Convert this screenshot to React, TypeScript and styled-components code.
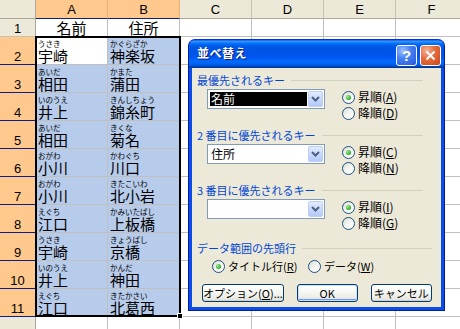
import React from "react";
import styled, { createGlobalStyle, css } from "styled-components";

const JP = `"Noto Sans CJK JP", "Liberation Sans", sans-serif`;

const GlobalStyle = createGlobalStyle`
  html, body {
    margin: 0;
    padding: 0;
    background: #ffffff;
    overflow: hidden;
  }
  body {
    font-family: "Liberation Sans", "Noto Sans CJK JP", sans-serif;
  }
  * {
    box-sizing: border-box;
  }
`;

const Screen = styled.div`
  position: relative;
  width: 460px;
  height: 329px;
  overflow: hidden;
  background: #ffffff;
`;

/* ---------- sheet ---------- */

type Pos = { $r: number; $c: number };

const placed = css<Pos>`
  grid-row: ${(p) => p.$r};
  grid-column: ${(p) => p.$c};
`;

const Sheet = styled.div`
  display: grid;
  grid-template-columns: 36px repeat(6, 72px);
  grid-template-rows: 19px 18px repeat(11, 28px);
`;

const Corner = styled.div<Pos>`
  ${placed}
  background: #ece9d8;
  border-right: 1px solid #aca899;
  border-bottom: 1px solid #aca899;
`;

const ColHeader = styled.div<Pos & { $active?: boolean }>`
  ${placed}
  display: flex;
  align-items: center;
  justify-content: center;
  padding-top: 1px;
  font-size: 13px;
  line-height: 14px;
  color: #000;
  background: ${(p) => (p.$active ? "#ffc88c" : "#ece9d8")};
  border-right: 1px solid ${(p) => (p.$active ? "#eab27a" : "#c5c2b2")};
  border-bottom: 1px solid ${(p) => (p.$active ? "#0a1e8c" : "#aca899")};
`;

const RowHeader = styled.div<Pos & { $active?: boolean }>`
  ${placed}
  display: flex;
  align-items: flex-end;
  justify-content: center;
  font-size: 13px;
  line-height: 14px;
  color: #000;
  background: ${(p) => (p.$active ? "#ffc88c" : "#ece9d8")};
  border-right: 1px solid ${(p) => (p.$active ? "#0a1e8c" : "#aca899")};
  border-bottom: 1px solid ${(p) => (p.$active ? "#0a1e8c" : "#c5c2b2")};
`;

const Cell = styled.div<Pos & { $selected?: boolean }>`
  ${placed}
  background: ${(p) => (p.$selected ? "#b7cbeb" : "#ffffff")};
  border-right: 1px solid #c0c0c0;
  border-bottom: 1px solid #c0c0c0;
  padding: 2px 0 0 2px;
  overflow: hidden;
  white-space: nowrap;
  font-family: ${JP};
  color: #000;
`;

const HeadCell = styled(Cell)`
  padding: 1px 0 0;
  text-align: center;
  font-size: 15px;
  line-height: 16px;
`;

const Kana = styled.div`
  font-size: 7.5px;
  line-height: 9px;
  height: 9px;
`;

const Kanji = styled.div`
  font-size: 15px;
  line-height: 16px;
`;

const Selection = styled.div`
  position: relative;
  grid-column: 2 / 4;
  grid-row: 3 / 13;
  margin: -1px -1px 0 -1px;
  border: 2px solid #000;
  pointer-events: none;
`;

const FillHandle = styled.div`
  position: absolute;
  right: -4px;
  bottom: -4px;
  width: 6px;
  height: 6px;
  background: #000;
  border: 1px solid #fff;
`;

/* ---------- dialog ---------- */

const Dialog = styled.div`
  position: absolute;
  left: 188px;
  top: 39px;
  width: 257px;
  height: 272px;
  display: flex;
  flex-direction: column;
  border: 1px solid #001ea0;
  border-top-color: #0831d9;
  border-radius: 7px 7px 0 0;
  background: #0b4ce6;
  overflow: hidden;
  font-family: ${JP};
`;

const TitleBar = styled.div`
  flex: none;
  height: 28px;
  display: flex;
  align-items: flex-end;
  padding: 0 3px 2px 8px;
  background: linear-gradient(
    to bottom,
    #0058ee 0%,
    #3a93ff 4%,
    #288eff 7%,
    #127dff 10%,
    #036ffc 13%,
    #0262ee 18%,
    #0057e5 24%,
    #0054e3 30%,
    #0055eb 56%,
    #005bf5 66%,
    #026afe 76%,
    #0062ef 86%,
    #0052d6 92%,
    #0040ab 96%,
    #003092 100%
  );
`;

const Title = styled.div`
  flex: 1;
  align-self: center;
  color: #ffffff;
  font-size: 12px;
  font-weight: bold;
  line-height: 16px;
  letter-spacing: 0.5px;
  text-shadow: 1px 1px 0 #0a1883;
`;

const CaptionButton = styled.div<{ $kind: "help" | "close" }>`
  width: 21px;
  height: 21px;
  display: flex;
  align-items: center;
  justify-content: center;
  border: 1px solid #ffffff;
  border-radius: 3px;
  color: #ffffff;
  font: bold 15px "Liberation Sans", sans-serif;
  background: ${(p) =>
    p.$kind === "close"
      ? "radial-gradient(circle at 30% 25%, #f4b49e 0%, #e6703f 40%, #cc4416 100%)"
      : "radial-gradient(circle at 30% 25%, #9cc0ff 0%, #4a82f4 40%, #2456d8 100%)"};
  & + & {
    margin-left: 3px;
  }
`;

const Body = styled.div`
  flex: 1;
  margin: 0 3px 3px;
  padding: 5px 9px 0 5px;
  display: flex;
  flex-direction: column;
  background: #ece9d8;
`;

const Section = styled.div<{ $top?: number }>`
  display: flex;
  flex-direction: column;
  margin-top: ${(p) => p.$top ?? 0}px;
`;

const GroupLabel = styled.div<{ $inset?: boolean }>`
  display: flex;
  align-items: center;
  gap: 6px;
  height: 14px;
  margin-right: ${(p) => (p.$inset ? 9 : 0)}px;
  color: #0046d5;
  font-size: 11px;
  line-height: 14px;
  white-space: nowrap;
  &::after {
    content: "";
    flex: 1;
    height: 1px;
    margin-top: 1px;
    background: #d0d0bf;
  }
`;

const KeyRow = styled.div`
  display: flex;
  height: 32px;
  margin-top: 2px;
`;

const Combo = styled.div`
  flex: none;
  display: flex;
  width: 118px;
  height: 20px;
  margin-left: 10px;
  border: 1px solid #7f9db9;
  background: #ffffff;
`;

const ComboValue = styled.div<{ $highlight?: boolean }>`
  flex: 1;
  margin: 2px 0 2px 2px;
  padding-left: 1px;
  font-size: 12px;
  line-height: 14px;
  white-space: nowrap;
  background: ${(p) => (p.$highlight ? "#000000" : "transparent")};
  color: ${(p) => (p.$highlight ? "#ffffff" : "#000000")};
`;

const DropButton = styled.div`
  flex: none;
  width: 15px;
  margin: 1px;
  display: flex;
  align-items: center;
  justify-content: center;
  border: 1px solid #bccdf6;
  border-radius: 2px;
  background: linear-gradient(#e2ebfe, #c8d8fc 55%, #b4c9f8);
`;

const RadioStack = styled.div`
  display: flex;
  flex-direction: column;
  margin-left: 17px;
`;

const RadioLine = styled.div`
  display: flex;
  margin-top: 3px;
  padding-left: 15px;
`;

const RadioItem = styled.div<{ $width?: number; $compact?: boolean }>`
  display: flex;
  align-items: center;
  gap: 3px;
  height: 16px;
  width: ${(p) => (p.$width ? `${p.$width}px` : "auto")};
  font-size: ${(p) => (p.$compact ? 11 : 12)}px;
  line-height: 14px;
  color: #000;
  white-space: nowrap;
`;

const RadioDot = styled.span<{ $checked?: boolean }>`
  flex: none;
  width: 13px;
  height: 13px;
  display: flex;
  align-items: center;
  justify-content: center;
  border: 1px solid #1c5180;
  border-radius: 50%;
  background: linear-gradient(135deg, #dcdcd4 0%, #f2f2ee 45%, #ffffff 80%);
  &::after {
    content: "";
    display: ${(p) => (p.$checked ? "block" : "none")};
    width: 5px;
    height: 5px;
    border-radius: 50%;
    background: radial-gradient(circle at 35% 35%, #a4ec8f 0%, #3bb83b 55%, #1f8f1f 100%);
  }
`;

const RadioText = styled.span``;

const Key = styled.span`
  text-decoration: underline;
  text-underline-offset: 1px;
`;

const ButtonRow = styled.div`
  display: flex;
  gap: 13px;
  margin-top: 10px;
  padding-left: 5px;
`;

const PushButton = styled.div<{ $width: number; $default?: boolean }>`
  width: ${(p) => p.$width}px;
  height: 18px;
  border: 1px solid #003c74;
  border-radius: 3px;
  font-size: 11px;
  line-height: 16px;
  text-align: center;
  color: #000;
  white-space: nowrap;
  background: linear-gradient(#ffffff, #f4f4f0 55%, #e4e2d8);
  box-shadow: ${(p) =>
    p.$default
      ? "inset 0 0 0 1px #cde0fb, inset 0 -1px 0 1px #6d94e8"
      : "inset 0 -1px 0 #d6d0c5"};
`;

/* ---------- data ---------- */

const COLS = ["A", "B", "C", "D", "E", "F"];

const ROWS: [string, string][][] = [
  [["うさき", "宇崎"], ["かぐらざか", "神楽坂"]],
  [["あいだ", "相田"], ["かまた", "蒲田"]],
  [["いのうえ", "井上"], ["きんしちょう", "錦糸町"]],
  [["あいだ", "相田"], ["きくな", "菊名"]],
  [["おがわ", "小川"], ["かわぐち", "川口"]],
  [["おがわ", "小川"], ["きたこいわ", "北小岩"]],
  [["えぐち", "江口"], ["かみいたばし", "上板橋"]],
  [["うさき", "宇崎"], ["きょうばし", "京橋"]],
  [["いのうえ", "井上"], ["かんだ", "神田"]],
  [["えぐち", "江口"], ["きたかさい", "北葛西"]],
];

const KEYS = [
  { label: "最優先されるキー", value: "名前", highlight: true, asc: "A", desc: "D" },
  { label: "2 番目に優先されるキー", value: "住所", highlight: false, asc: "C", desc: "N" },
  { label: "3 番目に優先されるキー", value: "", highlight: false, asc: "I", desc: "G" },
];

const Blanks = ({ row, from }: { row: number; from: number }) => (
  <>
    {Array.from({ length: 8 - from }).map((_, i) => (
      <Cell key={i} $r={row} $c={from + i} />
    ))}
  </>
);

const Chevron = () => (
  <svg width="9" height="6" viewBox="0 0 9 6">
    <path d="M1 1 L4.5 4.5 L8 1" fill="none" stroke="#4d6185" strokeWidth="2" />
  </svg>
);

const CloseGlyph = () => (
  <svg width="11" height="11" viewBox="0 0 11 11">
    <path d="M1.5 1.5 L9.5 9.5 M9.5 1.5 L1.5 9.5" stroke="#ffffff" strokeWidth="2" />
  </svg>
);

const App = (): JSX.Element => {
  return (
    <Screen>
      <GlobalStyle />
      <Sheet>
        <Corner $r={1} $c={1} />
        {COLS.map((c, i) => (
          <ColHeader key={c} $r={1} $c={i + 2} $active={i < 2}>
            {c}
          </ColHeader>
        ))}

        <RowHeader $r={2} $c={1}>1</RowHeader>
        <HeadCell $r={2} $c={2}>名前</HeadCell>
        <HeadCell $r={2} $c={3}>住所</HeadCell>
        <Blanks row={2} from={4} />

        {ROWS.map((row, r) => (
          <React.Fragment key={r}>
            <RowHeader $r={r + 3} $c={1} $active>
              {r + 2}
            </RowHeader>
            {row.map(([kana, kanji], c) => (
              <Cell key={c} $r={r + 3} $c={c + 2} $selected={!(r === 0 && c === 0)}>
                <Kana>{kana}</Kana>
                <Kanji>{kanji}</Kanji>
              </Cell>
            ))}
            <Blanks row={r + 3} from={4} />
          </React.Fragment>
        ))}

        <RowHeader $r={13} $c={1}>12</RowHeader>
        <Blanks row={13} from={2} />

        <Selection>
          <FillHandle />
        </Selection>
      </Sheet>

      <Dialog>
        <TitleBar>
          <Title>並べ替え</Title>
          <CaptionButton $kind="help">?</CaptionButton>
          <CaptionButton $kind="close">
            <CloseGlyph />
          </CaptionButton>
        </TitleBar>
        <Body>
          {KEYS.map((k, i) => (
            <Section key={k.label} $top={i === 0 ? 0 : 7}>
              <GroupLabel $inset>{k.label}</GroupLabel>
              <KeyRow>
                <Combo>
                  <ComboValue $highlight={k.highlight}>{k.value}</ComboValue>
                  <DropButton>
                    <Chevron />
                  </DropButton>
                </Combo>
                <RadioStack>
                  <RadioItem>
                    <RadioDot $checked />
                    <RadioText>
                      昇順(<Key>{k.asc}</Key>)
                    </RadioText>
                  </RadioItem>
                  <RadioItem>
                    <RadioDot />
                    <RadioText>
                      降順(<Key>{k.desc}</Key>)
                    </RadioText>
                  </RadioItem>
                </RadioStack>
              </KeyRow>
            </Section>
          ))}

          <Section $top={10}>
            <GroupLabel>データ範囲の先頭行</GroupLabel>
            <RadioLine>
              <RadioItem $width={96} $compact>
                <RadioDot $checked />
                <RadioText>
                  タイトル行(<Key>R</Key>)
                </RadioText>
              </RadioItem>
              <RadioItem $compact>
                <RadioDot />
                <RadioText>
                  データ(<Key>W</Key>)
                </RadioText>
              </RadioItem>
            </RadioLine>
          </Section>

          <ButtonRow>
            <PushButton $width={84}>
              オプション(<Key>O</Key>)...
            </PushButton>
            <PushButton $width={62} $default>
              OK
            </PushButton>
            <PushButton $width={63}>キャンセル</PushButton>
          </ButtonRow>
        </Body>
      </Dialog>
    </Screen>
  );
};

export default App;
